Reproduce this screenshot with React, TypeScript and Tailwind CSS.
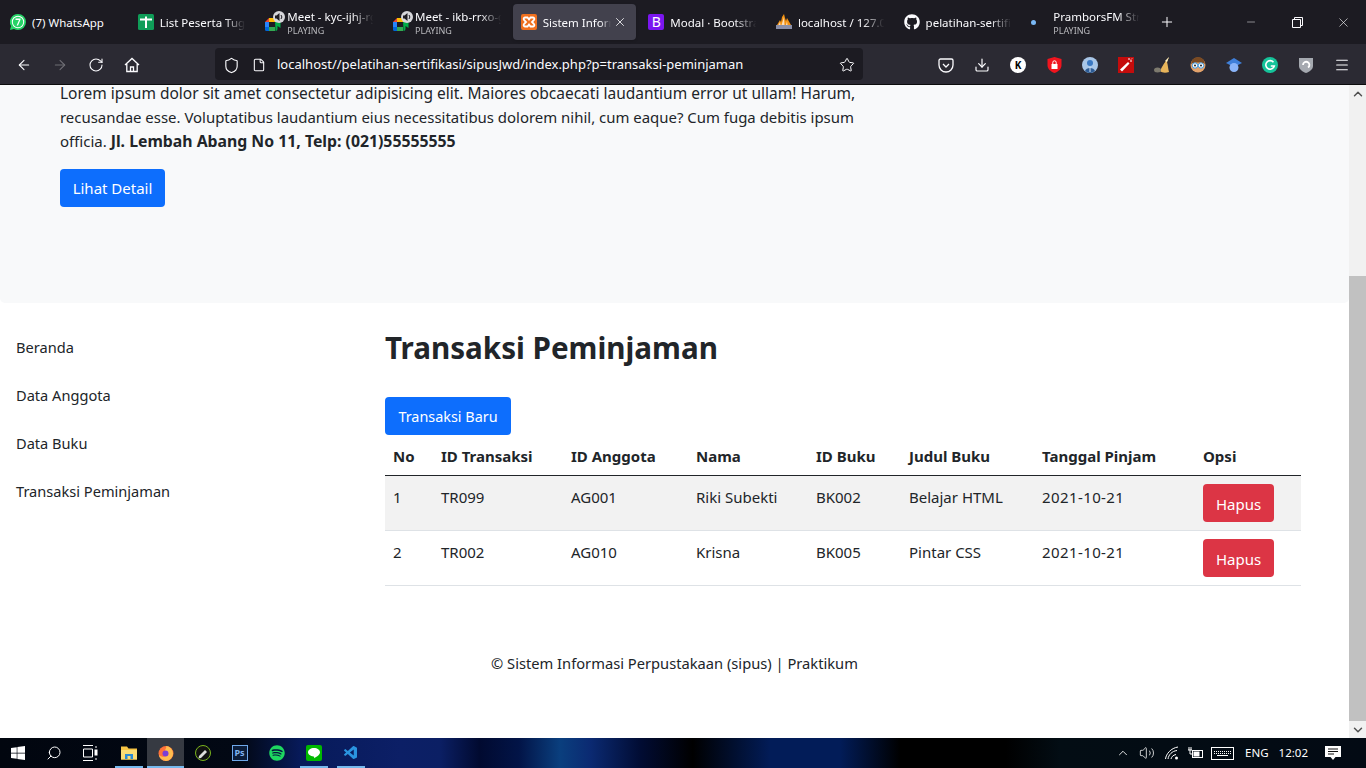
import type { ReactNode } from "react"
import { ArrowLeft, ArrowRight, RotateCw, Shield, File, Star, Download, Menu, Search, ChevronUp, ChevronDown, Volume2, Plus, Minus, X } from "lucide-react"
import { FaGithub, FaSpotify, FaWindows } from "react-icons/fa"
import { VscVscode } from "react-icons/vsc"

const font = "font-['Noto_Sans','Open_Sans',sans-serif]"

function Whatsapp() {
  return (
    <svg width="16" height="16" viewBox="0 0 16 16">
      <path d="M8 0a8 8 0 0 1 0 16 8 8 0 0 1-4-1l-4 1 1-4A8 8 0 0 1 8 0z" fill="#25d366" />
      <circle cx="8" cy="8" r="6.2" fill="#fff" />
      <circle cx="8" cy="8" r="5.2" fill="#25d366" />
      <path d="M5.500 4.500h5v1.200L8 11.500H6.600l2.400-5.600H5.500z" fill="#fff" />
    </svg>
  )
}

function Sheet() {
  return (
    <svg width="16" height="16" viewBox="0 0 16 16">
      <rect width="16" height="16" rx="1.500" fill="#0f9d58" />
      <path d="M2 4.500h5V2.500h2v2h5v2H9V14H7V6.500H2z" fill="#fff" />
    </svg>
  )
}

function MeetIcon() {
  return (
    <div className="relative w-[18px] h-[16px]">
      <svg width="16" height="13" viewBox="0 0 16 13" className="absolute left-0 bottom-[-1px]">
        <path d="M0 4l4-4h6v4H4v1H0z" fill="#ea4335" />
        <path d="M4 0h6v4H4z" fill="#fbbc04" />
        <path d="M0 4h4v5H0z" fill="#2684fc" />
        <path d="M0 9h4v4H1.500A1.500 1.500 0 0 1 0 11.500z" fill="#0066da" />
        <path d="M4 9h6v4H4z" fill="#34a853" />
        <path d="M10 3l2.500-1v3l3-2v7l-3-2v3a2 2 0 0 1-2 2z" fill="#00ac47" />
        <path d="M4 4h6v5H4z" fill="#1c1b22" />
      </svg>
      <div className="absolute right-[-4px] top-[-3px] w-[12px] h-[12px] rounded-full bg-[#d7d7db]">
        <svg width="12" height="12" viewBox="0 0 12 12">
          <path d="M2 4.500h1.500L6.500 2v8L3.500 7.500H2z" fill="#1c1b22" />
          <path d="M8 4a3 3 0 0 1 0 4" stroke="#1c1b22" fill="none" />
        </svg>
      </div>
    </div>
  )
}

function Xampp() {
  return (
    <svg width="16" height="16" viewBox="0 0 16 16">
      <rect width="16" height="16" rx="2" fill="#f0701e" />
      <path d="M4 3.500h2.500L8 5.500l1.500-2H12a1.500 1.500 0 0 1 1 2.500l-2 2 2 2a1.500 1.500 0 0 1-1 2.500H9.500L8 10.500l-1.500 2H4A1.500 1.500 0 0 1 3 10l2-2-2-2a1.500 1.500 0 0 1 1-2.500z" fill="none" stroke="#fff" strokeWidth="1.800" />
    </svg>
  )
}

function BootstrapIcon() {
  return (
    <div className="w-4 h-4 rounded-[2px] bg-[#7b16f0] flex items-center justify-center text-white text-[14px] leading-none">B</div>
  )
}

function Pma() {
  return (
    <svg width="16" height="16" viewBox="0 0 16 16">
      <path d="M1 11l3-5 1 2 1-5 2-3 1 4 1 3 1-3 4 7z" fill="#f29111" />
      <path d="M5.500 11L8 3l.5 8zM10 11l1-4 .5 4zM2.500 11L4 8l.5 3z" fill="#fff" fillOpacity="0.700" />
      <rect x="0" y="11" width="16" height="4" fill="#8a8fa8" />
    </svg>
  )
}

function ToolIcon({ children }: { children: ReactNode }) {
  return <div className="w-4 h-4 flex items-center justify-center">{children}</div>
}

type TabData = { label: string; icon: ReactNode; playing?: boolean; active?: boolean; short?: boolean }

const tabs: TabData[] = [
  { label: "(7) WhatsApp", icon: <Whatsapp />, short: true },
  { label: "List Peserta Tugas", icon: <Sheet /> },
  { label: "Meet - kyc-ijhj-rgt", icon: <MeetIcon />, playing: true },
  { label: "Meet - ikb-rrxo-gnw", icon: <MeetIcon />, playing: true },
  { label: "Sistem Informasi", icon: <Xampp />, active: true },
  { label: "Modal · Bootstrap v5", icon: <BootstrapIcon /> },
  { label: "localhost / 127.0.0.1", icon: <Pma /> },
  { label: "pelatihan-sertifikasi", icon: <FaGithub size={16} color="#fbfbfe" /> },
  {
    label: "PramborsFM Streaming",
    icon: (
      <div className="w-4 h-4 flex items-center">
        <div className="w-[5px] h-[5px] rounded-full bg-[#7ab8f5]" />
      </div>
    ),
    playing: true,
  },
]

function Tab({ tab }: { tab: TabData }) {
  let fade = "[mask-image:linear-gradient(to_right,black_72%,transparent_96%)]"
  if (tab.short) fade = ""
  if (tab.active) fade = "[mask-image:linear-gradient(to_right,black_85%,transparent_100%)]"
  return (
    <div className={`w-[127.67px] shrink-0 h-[44px] ${tab.active ? "py-[4px] px-[2px]" : ""}`}>
      <div className={`h-full flex items-center ${tab.active ? "bg-[#42414d] rounded-[4px] pl-[8px] pr-[9px] shadow-sm" : "pl-[10px] pr-[6px]"}`}>
        <div className="w-4 h-4 shrink-0 flex items-center">{tab.icon}</div>
        <div className={`ml-[6px] flex-1 min-w-0 overflow-hidden ${tab.playing ? "" : "pt-[2px]"} ${fade}`}>
          <div className="whitespace-nowrap text-[11.5px] leading-[16px] text-[#fbfbfe]">{tab.label}</div>
          {tab.playing && <div className="text-[9px] leading-[11px] text-[#b9b9bd] whitespace-nowrap">PLAYING</div>}
        </div>
        {tab.active && <X size={14} strokeWidth={1.4} className="text-[#fbfbfe] ml-[2px] shrink-0" />}
      </div>
    </div>
  )
}

function BrowserChrome() {
  return (
    <header className="shrink-0">
      <div className="h-[44px] bg-[#1c1b22] flex items-center">
        {tabs.map((t) => <Tab key={t.label} tab={t} />)}
        <Plus size={16} strokeWidth={1.5} className="text-[#fbfbfe] ml-[10px] shrink-0" />
        <div className="ml-auto flex items-center h-full text-[#fbfbfe]">
          <div className="w-[46px] flex justify-center"><Minus size={12} strokeWidth={1} /></div>
          <div className="w-[46px] flex justify-center">
            <svg width="11" height="11" viewBox="0 0 11 11" fill="none" stroke="currentColor">
              <path d="M.5 2.500h8v8h-8zM2.500 2.500v-2h8v8h-2" />
            </svg>
          </div>
          <div className="w-[46px] flex justify-center"><X size={15} strokeWidth={1} /></div>
        </div>
      </div>
      <div className="h-[41px] bg-[#2b2a33] border-b border-[#0c0c0d] flex items-center text-[#fbfbfe]">
        <div className="w-[215px] flex items-center shrink-0 pl-[16px] pt-[2px] gap-[20px]">
          <ArrowLeft size={16} strokeWidth={1.6} />
          <ArrowRight size={16} strokeWidth={1.6} className="text-[#6f6e75]" />
          <RotateCw size={16} strokeWidth={1.6} />
          <svg width="16" height="16" viewBox="0 0 16 16" fill="none" stroke="currentColor" strokeWidth="1.300">
            <path d="M1 8l7-6.500L15 8M2.800 7v7.500h10.400V7M6.500 14.500V10h3v4.500" />
          </svg>
        </div>
        <div className="w-[648px] h-[32px] bg-[#1c1b22] rounded-[4px] flex items-center pl-[8px] pr-[8px] pt-[2px] shrink-0">
          <Shield size={17} strokeWidth={1.6} />
          <File size={14} strokeWidth={1.8} className="ml-[12px]" />
          <span className="ml-[11px] text-[13px] whitespace-nowrap text-[#fbfbfe]">localhost//pelatihan-sertifikasi/sipusJwd/index.php?p=transaksi-peminjaman</span>
          <Star size={16} strokeWidth={1.5} className="ml-auto" />
        </div>
        <div className="ml-[75px] pt-[2px] flex items-center gap-[20px]">
          <ToolIcon>
            <svg width="16" height="15" viewBox="0 0 16 15" fill="none" stroke="currentColor" strokeWidth="1.300">
              <path d="M2.500 1h11A1.500 1.500 0 0 1 15 2.500V7A7 7 0 0 1 1 7V2.500A1.500 1.500 0 0 1 2.500 1z" />
              <path d="M5 6l3 3 3-3" />
            </svg>
          </ToolIcon>
          <ToolIcon><Download size={16} strokeWidth={1.8} /></ToolIcon>
          <ToolIcon>
            <div className="w-4 h-4 rounded-full bg-white text-black text-[10px] font-bold flex items-center justify-center leading-none">K</div>
          </ToolIcon>
          <ToolIcon>
            <svg width="15" height="16" viewBox="0 0 15 16">
              <path d="M7.500 0l7 2v6c0 4-3 6.500-7 8-4-1.500-7-4-7-8V2z" fill="#f0141e" />
              <rect x="4.500" y="7" width="6" height="5" fill="#fff" />
              <path d="M5.800 7V5.500a1.700 1.700 0 0 1 3.400 0V7" fill="none" stroke="#fff" />
            </svg>
          </ToolIcon>
          <ToolIcon>
            <svg width="16" height="16" viewBox="0 0 16 16">
              <circle cx="8" cy="8" r="8" fill="#a8c6e8" />
              <circle cx="8" cy="6" r="3" fill="#3a78c2" />
              <path d="M3 14c1-4 9-4 10 0a8 8 0 0 1-10 0z" fill="#2d5b94" />
              <path d="M8 10v5" stroke="#cfe0f2" />
            </svg>
          </ToolIcon>
          <ToolIcon>
            <svg width="16" height="16" viewBox="0 0 16 16">
              <rect width="16" height="16" fill="#c40c0c" />
              <path d="M2 12.500L10 5l1.500 1.500L4 14.500z" fill="#fff" />
              <path d="M11 1v2M14 4h-2M14 1.500l-1 1" stroke="#fff" />
            </svg>
          </ToolIcon>
          <ToolIcon>
            <svg width="16" height="16" viewBox="0 0 16 16">
              <path d="M15 0l-2 5c1 3 1 7 2 10-3 1-7 1-9-1 2-5 5-9 9-14z" fill="#e8b45a" />
              <path d="M15 0l-2 5-2-1z" fill="#fff3c4" />
              <ellipse cx="3.500" cy="13" rx="3.500" ry="2.500" fill="#7d7a6e" />
            </svg>
          </ToolIcon>
          <ToolIcon>
            <svg width="16" height="16" viewBox="0 0 16 16">
              <circle cx="8" cy="8" r="7.500" fill="#e2a26b" />
              <path d="M1 7a7 7 0 0 1 14 0c-3-2-10-2-14 0z" fill="#7a4a22" />
              <circle cx="5" cy="8.500" r="2.700" fill="#fff" stroke="#3b9be6" />
              <circle cx="11" cy="8.500" r="2.700" fill="#fff" stroke="#3b9be6" />
              <circle cx="5" cy="8.500" r="1" fill="#222" />
              <circle cx="11" cy="8.500" r="1" fill="#222" />
            </svg>
          </ToolIcon>
          <ToolIcon>
            <svg width="16" height="16" viewBox="0 0 16 16">
              <path d="M8 1l8 5-8 4-8-4z" fill="#3f7fd9" />
              <circle cx="8" cy="10.500" r="4.500" fill="#8ab4f8" />
            </svg>
          </ToolIcon>
          <ToolIcon>
            <svg width="16" height="16" viewBox="0 0 16 16">
              <circle cx="8" cy="8" r="8" fill="#15c39a" />
              <path d="M11.500 5.200A4.300 4.300 0 1 0 12.300 9H8.800" fill="none" stroke="#fff" strokeWidth="1.600" />
            </svg>
          </ToolIcon>
          <ToolIcon>
            <svg width="14" height="16" viewBox="0 0 14 16">
              <path d="M0 1h14v8c0 3-3 5.500-7 7-4-1.500-7-4-7-7z" fill="#a5a9b0" />
              <path d="M4 8a3.200 3.200 0 1 1 5 2.600" fill="none" stroke="#fff" strokeWidth="1.800" />
            </svg>
          </ToolIcon>
          <ToolIcon><Menu size={16} strokeWidth={1.6} /></ToolIcon>
        </div>
      </div>
    </header>
  )
}

function Hero() {
  return (
    <section className="bg-[#f8f9fa] h-[218px] rounded-b-[5px] pl-[60px] overflow-hidden">
      <p className="-mt-[4px] leading-[24px] mb-[16px] text-[#212529] whitespace-nowrap">
        <span className="block text-[15.5px]">Lorem ipsum dolor sit amet consectetur adipisicing elit. Maiores obcaecati laudantium error ut ullam! Harum,</span>
        <span className="block text-[14.95px]">recusandae esse. Voluptatibus laudantium eius necessitatibus dolorem nihil, cum eaque? Cum fuga debitis ipsum</span>
        <span className="block text-[15px]">officia. <b className="text-[15.8px]">Jl. Lembah Abang No 11, Telp: (021)55555555</b></span>
      </p>
      <button className="h-[38px] w-[105px] bg-[#0d6efd] text-white rounded-[4px] text-[15px]">Lihat Detail</button>
    </section>
  )
}

const navItems = ["Beranda", "Data Anggota", "Data Buku", "Transaksi Peminjaman"]

const rows = [
  ["1", "TR099", "AG001", "Riki Subekti", "BK002", "Belajar HTML", "2021-10-21"],
  ["2", "TR002", "AG010", "Krisna", "BK005", "Pintar CSS", "2021-10-21"],
]

function Sidebar() {
  return (
    <nav className="w-[385px] shrink-0 pt-[20px] pl-[16px]">
      {navItems.map((n) => (
        <div key={n} className="h-[48px] leading-[48px] text-[14.6px] text-[#212529]">{n}</div>
      ))}
    </nav>
  )
}

function TransaksiTable() {
  const th = "text-left font-bold px-[8px] h-[38px] align-middle"
  return (
    <table className="w-[916px] table-fixed border-collapse text-[15px] text-[#212529]">
      <thead>
        <tr className="border-b border-[#212529]">
          <th className={`${th} w-[48px]`}>No</th>
          <th className={`${th} w-[130px]`}>ID Transaksi</th>
          <th className={`${th} w-[125px]`}>ID Anggota</th>
          <th className={`${th} w-[120px]`}>Nama</th>
          <th className={`${th} w-[93px]`}>ID Buku</th>
          <th className={`${th} w-[133px]`}>Judul Buku</th>
          <th className={`${th} w-[161px]`}>Tanggal Pinjam</th>
          <th className={th}>Opsi</th>
        </tr>
      </thead>
      <tbody>
        {rows.map((r, i) => (
          <tr key={r[0]} className={`border-b border-[#dee2e6] ${i === 0 ? "bg-[#f2f2f2]" : ""}`}>
            {r.map((c, j) => (
              <td key={j} className={`px-[8px] pt-[9px] pb-[7px] align-top leading-[24px] h-[54px] ${j === 6 ? "tracking-[0.4px]" : ""}`}>{c}</td>
            ))}
            <td className="p-[8px] align-top">
              <button className="h-[38px] w-[71px] pt-[4px] bg-[#dc3545] text-white rounded-[4px] text-[15px]">Hapus</button>
            </td>
          </tr>
        ))}
      </tbody>
    </table>
  )
}

function Scrollbar() {
  return (
    <div className="w-[17px] shrink-0 bg-[#f1f1f1] flex flex-col text-[#505050]">
      <div className="h-[17px] flex items-center justify-center"><ChevronUp size={14} strokeWidth={2.5} /></div>
      <div className="h-[174px]" />
      <div className="flex-1 bg-[#c1c1c1]" />
      <div className="h-[17px] flex items-center justify-center"><ChevronDown size={14} strokeWidth={2.5} /></div>
    </div>
  )
}

function TaskIcon({ children, active, running }: { children: ReactNode; active?: boolean; running?: boolean }) {
  return (
    <div className={`relative w-[37px] h-[30px] flex items-center justify-center ${active ? "bg-[#363a42]" : ""}`}>
      {children}
      {active && <div className="absolute bottom-0 inset-x-0 h-[2px] bg-[#76b9ed]" />}
      {running && <div className="absolute bottom-0 left-[5px] right-[4px] h-[2px] bg-[#76b9ed]" />}
    </div>
  )
}

function Taskbar() {
  return (
    <footer className="h-[30px] shrink-0 flex items-center text-white bg-[linear-gradient(90deg,#01060f_0%,#020814_17.6%,#071a5a_22%,#0c1f66_29.3%,#0b1f64_32.2%,#010a30_35.1%,#021447_38%,#0a3f7e_41%,#0b2a72_43.2%,#010c33_46.9%,#000000_50.7%,#021c58_56.4%,#021c58_61.5%,#000000_65.9%,#000000_73.6%,#030d14_77.6%,#030a14_100%)]">
      <div className="w-[36px] flex justify-center"><FaWindows size={16} /></div>
      <div className="w-[36px] flex justify-center"><Search size={16} strokeWidth={1.5} className="-scale-x-100" /></div>
      <div className="w-[36px] flex justify-center mr-[2px]">
        <svg width="16" height="16" viewBox="0 0 16 16" fill="none" stroke="currentColor">
          <path d="M1 .5h10M1 15.500h10M1.500 4h9v8h-9zM14 1v2M14 13v2" />
          <rect x="13" y="5" width="2" height="5" fill="currentColor" />
        </svg>
      </div>
      <TaskIcon running>
        <svg width="16" height="16" viewBox="0 0 16 16">
          <path d="M0 1.500h6l1.500 2H16v11H0z" fill="#f6c445" />
          <path d="M0 5h16v9.500H0z" fill="#fbdc75" />
          <path d="M4 9h8v5H9.500v-3h-3v3H4z" fill="#2a8ad4" />
        </svg>
      </TaskIcon>
      <TaskIcon active>
        <svg width="16" height="16" viewBox="0 0 16 16">
          <circle cx="8" cy="8.500" r="7.500" fill="#ff7139" />
          <path d="M8 1c3 0 7 3 7 7.500S11 16 8 16 1 13 1 10c3 3 8 2 8-1 0-1.500-2-2-2-3 0-2 2-3 1-5z" fill="#ffbd4f" />
          <circle cx="7.500" cy="8.500" r="3" fill="#7b3fd6" />
          <path d="M1 9c1 5 6 7 9 6.500-4 .5-8-2-9-6.500z" fill="#e31587" />
        </svg>
      </TaskIcon>
      <TaskIcon>
        <svg width="16" height="16" viewBox="0 0 16 16">
          <circle cx="8" cy="8" r="7.500" fill="#111" stroke="#7ab51d" />
          <path d="M4 11l6-6 2 2-6 6-2.500.5z" fill="#ddd" />
        </svg>
      </TaskIcon>
      <TaskIcon>
        <div className="w-4 h-4 border border-[#6fa8ea] bg-[#0b1d3a] text-[#7fb2f0] text-[9px] font-bold leading-[14px] text-center">Ps</div>
      </TaskIcon>
      <TaskIcon><FaSpotify size={16} color="#1ed760" /></TaskIcon>
      <TaskIcon running>
        <svg width="16" height="16" viewBox="0 0 16 16">
          <rect width="16" height="16" rx="2" fill="#00b900" />
          <path d="M8 3c3.300 0 6 1.900 6 4.300 0 2.500-3.500 4.700-6 6 .4-1 .3-1.700-.5-1.800C4.500 11.300 2 9.500 2 7.300 2 4.900 4.700 3 8 3z" fill="#fff" />
        </svg>
      </TaskIcon>
      <TaskIcon running><VscVscode size={16} color="#2a94e0" /></TaskIcon>

      <div className="ml-auto flex items-center h-full">
        <ChevronUp size={14} strokeWidth={1.5} className="mr-[9px]" />
        <Volume2 size={16} strokeWidth={1.2} className="mr-[10px]" />
        <svg width="14" height="14" viewBox="0 0 14 14" fill="none" stroke="currentColor" className="mr-[9px]">
          <path d="M.5 13C1 8 6 2 13 1M3 13c.5-4 4-8 9-8.500M6 13c.5-2 2-4 5-4.500" />
          <circle cx="11.500" cy="12" r="1.500" fill="currentColor" stroke="none" />
        </svg>
        <svg width="15" height="14" viewBox="0 0 15 14" fill="none" stroke="currentColor" className="mr-[8px]">
          <rect x="4.500" y="4.500" width="10" height="7" />
          <rect x="5.500" y="5.500" width="6" height="5" fill="currentColor" stroke="none" />
          <path d="M0 4h4M1 1v3M3 1v3M2 4v4h2" />
        </svg>
        <div className="w-[23px] h-[13px] border border-white flex flex-col justify-center gap-[1px] px-[2px] mr-[11px]">
          <div className="border-t border-dotted border-white" />
          <div className="border-t border-dotted border-white" />
          <div className="border-t border-white mx-[3px]" />
        </div>
        <span className="text-[11.5px] mr-[10px]">ENG</span>
        <span className="text-[11.5px] mr-[5px]">12:02</span>
        <div className="w-[40px] flex justify-center mr-[13px]">
          <svg width="16" height="16" viewBox="0 0 16 16">
            <path d="M0 1h16v11h-5.500L8 15l-2.500-3H0z" fill="#fff" />
            <path d="M3 4h10M3 6.500h10M3 9h6" stroke="#111" />
          </svg>
        </div>
      </div>
    </footer>
  )
}

export default function App() {
  return (
    <div className={`h-[768px] w-[1366px] overflow-hidden flex flex-col bg-white ${font}`}>
      <BrowserChrome />
      <div className="flex-1 min-h-0 flex">
        <main className="flex-1 min-w-0">
          <Hero />
          <div className="flex">
            <Sidebar />
            <div className="flex-1 pt-[26px]">
              <h2 className="text-[29.6px] font-bold leading-[38px] text-[#212529] mb-[30px]">Transaksi Peminjaman</h2>
              <button className="block h-[38px] w-[126px] pt-[2px] bg-[#0d6efd] text-white rounded-[4px] text-[14.4px] mb-[2px]">Transaksi Baru</button>
              <TransaksiTable />
            </div>
          </div>
          <p className="text-center text-[14.7px] leading-[24px] text-[#212529] mt-[65px]">© Sistem Informasi Perpustakaan (sipus) | Praktikum</p>
        </main>
        <Scrollbar />
      </div>
      <Taskbar />
    </div>
  )
}
